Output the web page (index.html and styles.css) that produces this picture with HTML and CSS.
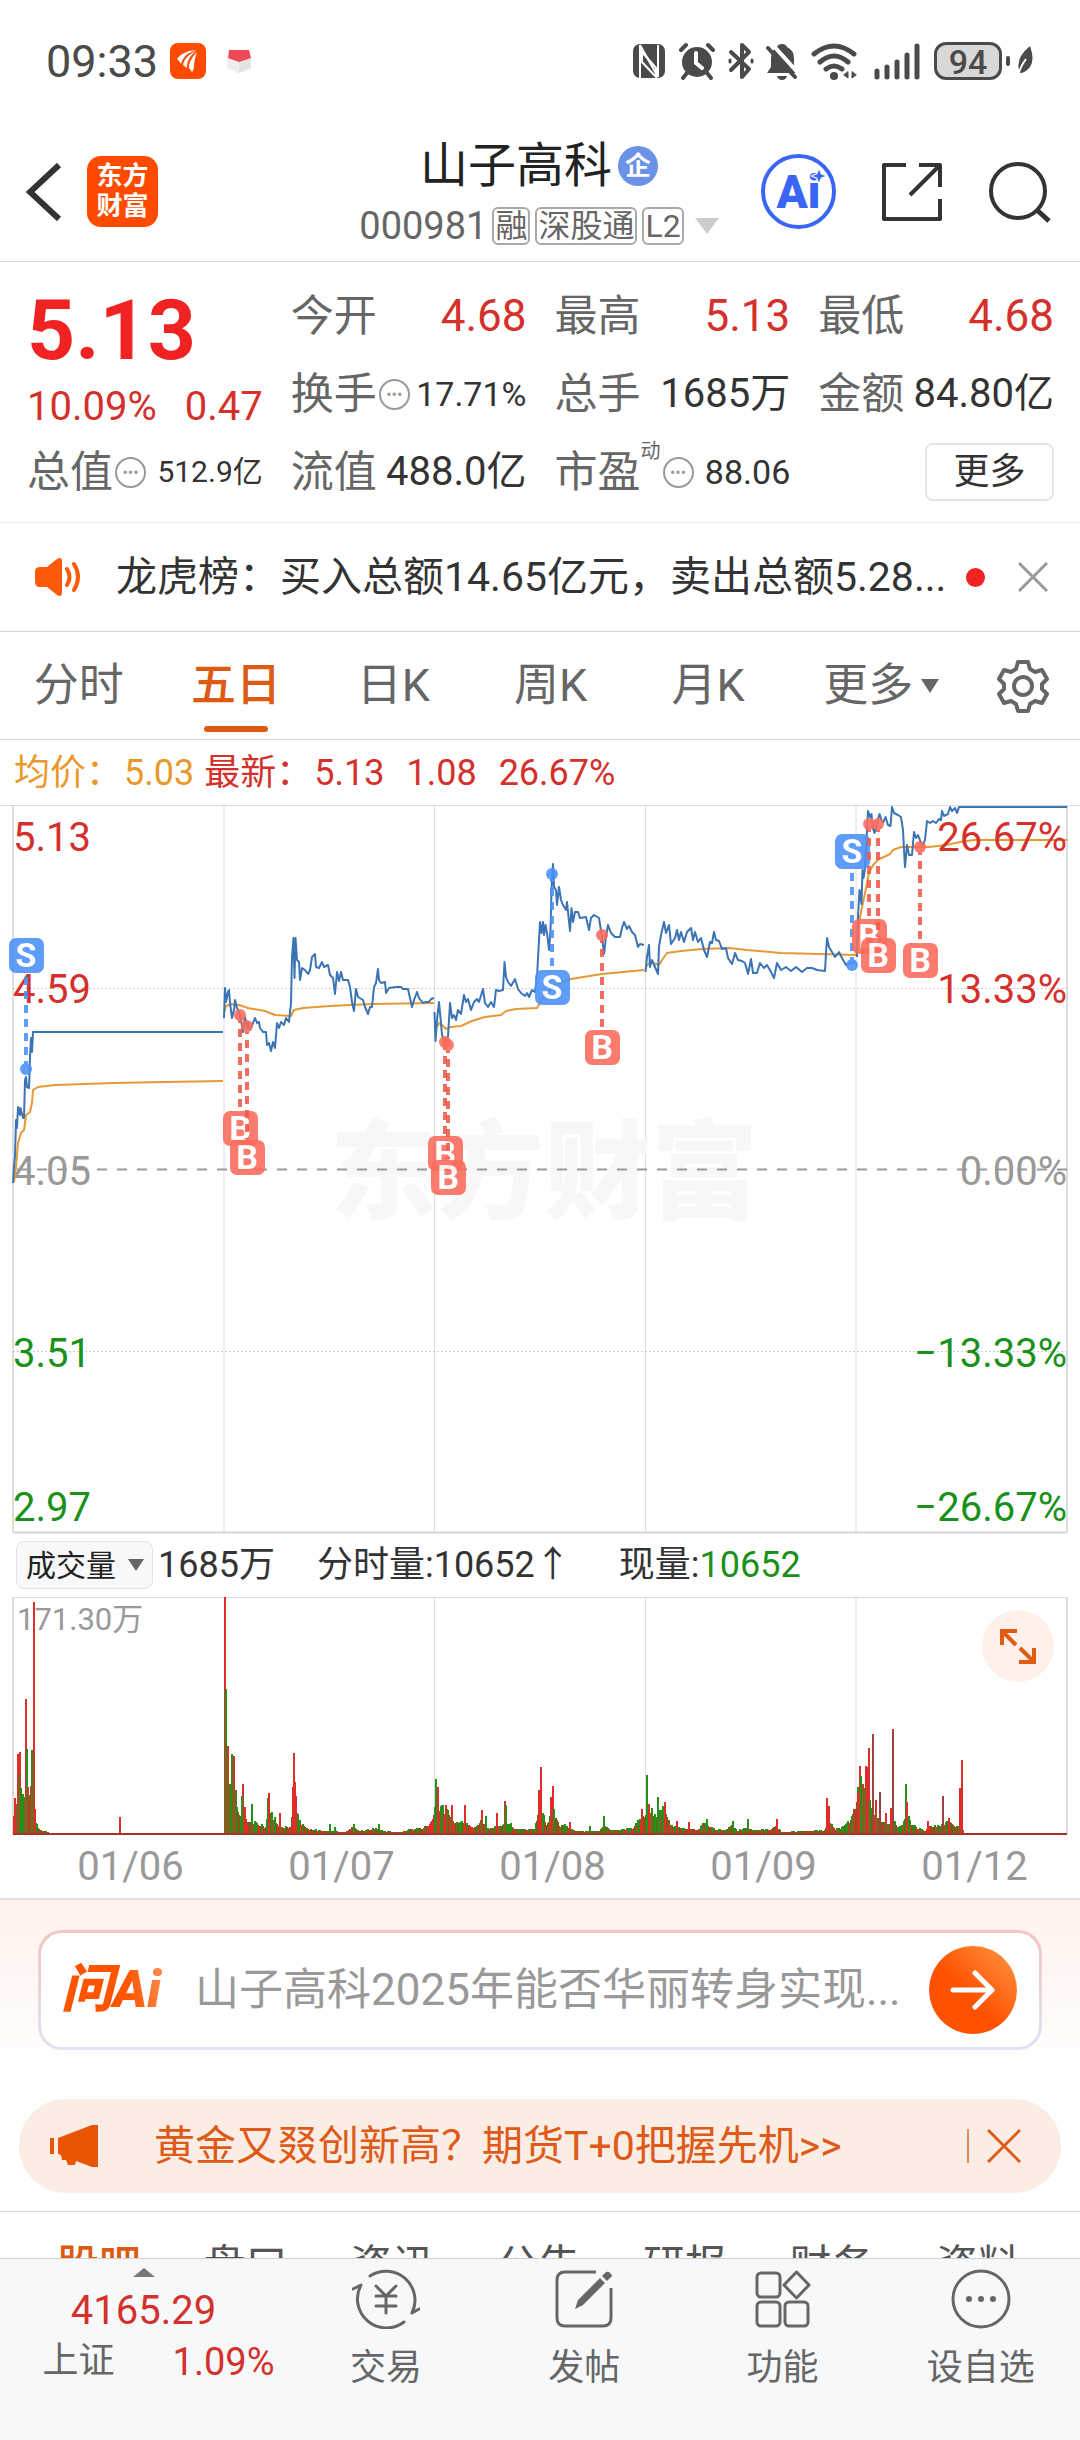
FILE: index.html
```html
<!DOCTYPE html>
<html lang="zh-CN">
<head>
  <meta charset="UTF-8">
  <meta name="viewport" content="width=device-width, initial-scale=1.0">
  <title>山子高科 000981</title>
  <link rel="stylesheet" href="styles.css">
</head>
<body>

  <!-- Status bar -->
  <div class="status-bar">
    <div class="status-left">
      <span class="clock">09:33</span>
      <svg width="36" height="36" viewBox="0 0 36 36">
        <rect width="36" height="36" rx="8" fill="#ff4a00"/>
        <path d="M7 16c3-5 11-9 20-9-8 2-14 6-16 14-1-2-2-3-4-5zM13 22c1-6 6-11 13-14-6 5-9 9-9 17zM19 25c0-6 3-11 8-16-2 6-3 10-3 14 0 3-1 5-2 6z" fill="#fff"/>
      </svg>
      <svg class="parcel" width="26" height="26" viewBox="0 0 26 26">
        <path d="M1 9h24v11l-12 5-12-5z" fill="#e6e2e2"/>
        <path d="M1 9h12v16L1 20z" fill="#f2eeee"/>
        <path d="M3 2h20l2 8-12 4L2 10z" fill="#ee4a56"/>
      </svg>
    </div>
    <div class="status-right">
      <svg width="34" height="36" viewBox="0 0 34 36">
        <rect x="1" y="1" width="32" height="34" rx="7" fill="#4a4a4a"/>
        <path d="M8 35V2M8 2l18 32M26 34V2" fill="none" stroke="#fff" stroke-width="2"/>
        <path d="M10 9v10l14 15V25z" fill="none" stroke="#fff" stroke-width="2"/>
      </svg>
      <svg width="38" height="38" viewBox="0 0 38 38" fill="none" stroke="#4a4a4a">
        <circle cx="19" cy="20" r="15" fill="#4a4a4a" stroke="none"/>
        <path d="M3 8l5-5M35 8l-5-5M9 31l-4 5M29 31l4 5" stroke-width="4" stroke-linecap="round"/>
        <path d="M18 11v10l6 5" stroke="#fff" stroke-width="4" stroke-linecap="round"/>
      </svg>
      <svg width="26" height="38" viewBox="0 0 26 38" fill="none" stroke="#4a4a4a" stroke-width="4" stroke-linejoin="round" stroke-linecap="round">
        <path d="M3 10l18 17-7 8V3l7 7L3 28"/>
        <path d="M2 18v2M24 18v2" stroke-width="3"/>
      </svg>
      <svg width="32" height="38" viewBox="0 0 32 38">
        <path d="M16 2q4 0 5 3 7 3 7 12v8l3 6H1l4-6v-8Q5 8 11 5q1-3 5-3zM11 34h10q-1 4-5 4t-5-4z" fill="#4a4a4a"/>
        <path d="M5 1l29 32" stroke="#fff" stroke-width="4"/>
        <path d="M2 6l27 29" stroke="#4a4a4a" stroke-width="4" stroke-linecap="round"/>
      </svg>
      <svg width="48" height="38" viewBox="0 0 48 38" fill="none" stroke="#4a4a4a" stroke-width="5" stroke-linecap="round">
        <path d="M4 12q20-16 40 0M10 20q14-12 28 0M16 27q8-6 16 0"/>
        <circle cx="24" cy="34" r="4" fill="#4a4a4a" stroke="none"/>
        <path d="M38 30v6l-4-3zM42 30v6l4-3z" stroke-width="1" fill="#4a4a4a"/>
      </svg>
      <svg class="signal" width="46" height="38" viewBox="0 0 46 38" stroke="#4a4a4a" stroke-width="5" stroke-linecap="round">
        <path d="M3 35v-6M13 35V25M23 35V20M33 35V13M43 35V4"/>
      </svg>
      <span class="battery">94</span>
      <svg width="28" height="38" viewBox="0 0 28 38">
        <rect x="0" y="14" width="4" height="10" rx="2" fill="#4a4a4a"/>
        <path d="M24 4q5 14 0 21-5 6-10 6Q8 17 24 4z" fill="#4a4a4a"/>
        <path d="M12 34q2-9 8-17" stroke="#fff" stroke-width="2" fill="none"/>
      </svg>
    </div>
  </div>

  <!-- Title bar -->
  <header class="header">
    <div class="header-left">
      <button class="icon-btn" aria-label="返回">
        <svg width="36" height="58" viewBox="0 0 36 58" fill="none" stroke="#333" stroke-width="6">
          <path d="M33 2L4 29l29 27"/>
        </svg>
      </button>
      <a class="brand" href="#">东方<br>财富</a>
    </div>
    <div class="stock">
      <h1 class="stock-name">山子高科<span class="badge">企</span></h1>
      <div class="stock-code">
        <span>000981</span>
        <span class="tag">融</span>
        <span class="tag">深股通</span>
        <span class="tag">L2</span>
        <svg class="code-arrow" width="24" height="16" viewBox="0 0 24 16"><path d="M0 0h24L12 16z" fill="#ccc"/></svg>
      </div>
    </div>
    <div class="header-right">
      <button class="ai-btn">Ai
        <svg width="16" height="16" viewBox="0 0 14 14"><path d="M7 0l2 5 5 2-5 2-2 5-2-5-5-2 5-2z" fill="#3b66f5" stroke="#fff"/></svg>
      </button>
      <button class="icon-btn" aria-label="分享">
        <svg width="62" height="62" viewBox="0 0 62 62" fill="none" stroke="#333" stroke-width="4" stroke-linejoin="round">
          <path d="M25 4H3v54h56V38M38 4h21v22M58 5L29 34"/>
        </svg>
      </button>
      <button class="icon-btn" aria-label="搜索">
        <svg width="64" height="64" viewBox="0 0 64 64" fill="none" stroke="#333" stroke-width="4">
          <circle cx="30" cy="31" r="27"/>
          <path d="M49 50l12 11" stroke-width="5"/>
        </svg>
      </button>
    </div>
  </header>

  <!-- Quote summary -->
  <section class="quote">
    <div class="price">
      <div class="price-now">5.13</div>
      <div class="price-change"><span>10.09%</span><span>0.47</span></div>
    </div>
    <div class="cell"><span class="label">今开</span><span class="value up">4.68</span></div>
    <div class="cell"><span class="label">最高</span><span class="value up">5.13</span></div>
    <div class="cell"><span class="label">最低</span><span class="value up">4.68</span></div>
    <div class="cell"><span class="label">换手<i class="dots">•••</i></span><span class="value small">17.71%</span></div>
    <div class="cell"><span class="label">总手</span><span class="value">1685万</span></div>
    <div class="cell"><span class="label">金额</span><span class="value">84.80亿</span></div>
    <div class="cell"><span class="label">总值<i class="dots">•••</i></span><span class="value tiny">512.9亿</span></div>
    <div class="cell"><span class="label">流值</span><span class="value">488.0亿</span></div>
    <div class="cell"><span class="label">市盈<sup>动</sup><i class="dots">•••</i></span><span class="value small">88.06</span></div>
    <div class="cell cell-more"><button class="more-btn">更多</button></div>
  </section>

  <!-- Notice -->
  <div class="notice">
    <svg width="48" height="40" viewBox="0 0 48 40">
      <path d="M6 10h7L23 2q5-3 5 3v30q0 6-5 3l-10-8H6q-5 0-5-5V15q0-5 5-5z" fill="#ff5a0a"/>
      <path d="M33 12q5 8 0 16M40 7q8 13 0 26" fill="none" stroke="#ff5a0a" stroke-width="4" stroke-linecap="round"/>
    </svg>
    <a class="notice-text" href="#">龙虎榜：买入总额14.65亿元，卖出总额5.28...</a>
    <span class="notice-dot"></span>
    <button class="icon-btn" aria-label="关闭">
      <svg width="30" height="30" viewBox="0 0 30 30" stroke="#999" stroke-width="3"><path d="M1 1l28 28M29 1L1 29"/></svg>
    </button>
  </div>

  <!-- Period tabs -->
  <nav class="tabs">
    <a href="#">分时</a>
    <a href="#" class="active">五日</a>
    <a href="#">日K</a>
    <a href="#">周K</a>
    <a href="#">月K</a>
    <button class="tabs-more">更多<svg width="18" height="14" viewBox="0 0 18 14"><path d="M0 0h18L9 14z" fill="#666"/></svg></button>
    <button class="icon-btn" aria-label="设置">
      <svg width="54" height="54" viewBox="0 0 54 54" fill="none" stroke="#666" stroke-width="4" stroke-linejoin="round">
        <path d="M22 3h10l2 7 5 3 7-2 5 9-5 5v5l5 5-5 9-7-2-5 3-2 7H22l-2-7-5-3-7 2-5-9 5-5v-5l-5-5 5-9 7 2 5-3z"/>
        <circle cx="27" cy="27" r="9"/>
      </svg>
    </button>
  </nav>

  <div class="averages">
    <span class="avg">均价：<b>5.03</b></span>
    <span class="last">最新：<b>5.13</b><b>1.08</b><b>26.67%</b></span>
  </div>

  <!-- Five day price chart -->
  <svg class="chart" viewBox="0 0 1080 730">
    <g fill="none" stroke="#dcdcdc" stroke-width="1">
      <path d="M0 1.5h1080M224 2v726M434.500 2v726M645.500 2v726M856 2v726"/>
      <path d="M13 2v726M1067 2v726" stroke-width="2"/>
      <path d="M13 728.500h1054" stroke="#d6d6d6" stroke-width="2"/>
      <path d="M13 184.500h1054M13 547.500h1054" stroke="#ccc" stroke-dasharray="2 2"/>
    </g>
    <text class="watermark" x="544" y="406">东方财富</text>
    <path d="M13 365.500h1054" stroke="#999" stroke-width="2" stroke-dasharray="10 10" stroke-dashoffset="-4"/>

    <g class="axis">
      <text class="rise" x="13" y="47">5.13</text>
      <text class="rise" x="13" y="199">4.59</text>
      <text class="flat" x="13" y="381">4.05</text>
      <text class="fall" x="13" y="563">3.51</text>
      <text class="fall" x="13" y="717">2.97</text>
    </g>

    <g class="line-avg">
      <polyline points="14,378 16,363 18,339 21,329 24,326 26,311 30,308 32,299 33,286 38,283 55,281 114,279 165,278 223,277"/>
      <polyline points="224,209 226,202 231,200 239,201 248,204 265,207 275,211 291,212 294,206 303,204 330,202 372,200 434,199"/>
      <polyline points="435,226 439,219 442,221 446,225 451,223 461,222 472,217 485,213 501,211 506,207 516,205 537,204 543,194 550,186 555,181 571,175 602,170 644,166"/>
      <polyline points="646,163 650,158 659,161 662,156 667,149 681,147 702,145 729,144 747,146 781,149 856,151"/>
      <polyline points="856,151 860,113 865,89 869,69 873,61 879,55 884,53 890,50 893,46 901,43 929,43 946,41 960,38 974,36 1067,36"/>
    </g>
    <g class="line-price">
      <polyline points="13,379 14,363 15,352 16,316 17,324 18,303 20,311 20.5,304 23,314 24,314 25,276 26,273 27,283 29,284 30,253 31,234 32,248 33,228 223,228"/>
      <polyline points="224,214 225,184 226,198 228,188 229,186 230,199 232,214 234,206 235,196 237,204 239,208 241,216 243,228 245,213 247,224 248,219 250,226 253,219 255,214 257,219 259,218 260,224 263,228 266,228 267,241 269,239 271,247 273,238 275,244 277,219 279,224 281,218 284,221 286,214 289,218 291,199 292,153 293.5,134 294.5,174 295.5,134 297,156 299,158 300,176 302,164 305,166 308,170 310,166 312,153 315,150 316,163 319,164 322,158 324,163 328,161 330,171 333,174 335,190 337,168 339,177 341,168 343,176 348,176 350,183 352,198 354,207 356,185 358,193 363,196 365,203 368,210 370,203 372,203 374,183 376,179 378,165 379,176 381,179 385,178 386,189 389,184 396,183 401,183 403,185 408,185 410,194 412,203 414,196 417,188 419,194 423,199 426,198 429,198 431,195 434,194"/>
      <polyline points="434.5,208 435.5,237 437,216 439,198 441,219 442,231 445,238 447,234 448,233 450,199 452,214 454,211 456,216 458,206 461,210 464,191 466,198 468,195 471,206 474,198 477,195 479,198 483,185 485,199 488,203 491,198 494,203 496,186 499,187 503,186 504.5,158 506,173 508,178 511,182 515,175 518,185 521,189 525,192 527,189 529,193 532,186 535,188 537,173 539,136 540,118 541.5,129 543,118 544,131 545.5,121 547,129 549,146 550.5,126 551.5,86 553,60 554,83 556,86 557,101 559,83 561,96 563,101 566,106 567,98 570,127 571.5,104 573,118 575,108 578,108 580,114 586,113 589,126 591,114 594,111 599,114 602,133 604,150 606,133 608,121 611,129 615,133 620,133 622,124 624,118 627,125 629,122 632,128 635,131 638,143 640,140 644,141"/>
      <polyline points="645.5,168 647,153 649,141 650,163 652,156 655,163 658,170 659,143 661,131 664,118 666,129 669,121 671,140 675,134 677,126 679,136 681,128 684,138 687,128 691,124 693,136 695,128 698,138 701,134 704,146 707,153 710,138 712,139 714,128 716,136 719,137 722,145 726,144 728,154 732,160 735,149 738,156 742,157 745,159 748,170 751,155 753,169 757,169 760,159 764,164 767,161 771,168 774,174 777,159 781,166 786,163 791,167 796,163 802,168 807,164 812,164 817,166 825,167 826,149 827,134 829,143 832,148 835,153 839,148 842,154 846,161 851,159 855,158"/>
      <polyline points="857,153 858,113 859.5,86 861.5,100 862.5,66 863.5,74 865,64 866.5,36 868,7 870,13 871.5,10 872.5,23 874.5,29 877,19 879.5,10 881.5,16 883.5,18 885.5,13 888,21 890.5,22 892,3 894,9 898,11 901,13 903,26 904,46 905,63 907,41 909,51 912,51 914,28 916,34 918,31 921,39 923,41 925,36 927,17 930,19 933,17 936,19 939,15 941,16 942,7 944,12 948,10 950,3 952,7 955,4 957,9 959,3 1067,3"/>
    </g>

    <g class="axis axis-right">
      <text class="rise" x="1067" y="47">26.67%</text>
      <text class="rise" x="1067" y="199">13.33%</text>
      <text class="flat" x="1067" y="381">0.00%</text>
      <text class="fall" x="1067" y="563">−13.33%</text>
      <text class="fall" x="1067" y="717">−26.67%</text>
    </g>

    <g id="trades"></g>
  </svg>

  <div class="volume-info">
    <select class="volume-select" aria-label="指标">
      <option>成交量</option>
    </select>
    <span class="volume-total">1685万</span>
    <span class="volume-minute">分时量:10652↑</span>
    <span>现量:<b>10652</b></span>
  </div>

  <!-- Volume chart -->
  <div class="volume">
    <svg class="chart" viewBox="0 0 1080 240">
      <path d="M13 1.500h1054M434.500 1v238M645.500 1v238M856 1v238" stroke="#dcdcdc"/>
      <path d="M13 1v238M1067 1v238" stroke="#dcdcdc" stroke-width="2"/>
      <text class="volume-max" x="17" y="34">171.30万</text>
      <g id="bars"></g>
      <path d="M13 238h1054" stroke="#a8322c" stroke-width="2"/>
    </svg>
    <button class="expand-btn" aria-label="全屏">
      <svg width="36" height="36" viewBox="0 0 36 36" fill="none" stroke="#e25b12" stroke-width="4">
        <path d="M2 17V3h15M3 4l13 13M34 20v14H19M33 33L20 20"/>
      </svg>
    </button>
  </div>
  <div class="dates">
    <span>01/06</span><span>01/07</span><span>01/08</span><span>01/09</span><span>01/12</span>
  </div>

  <!-- Ask AI -->
  <section class="ask">
    <form class="ask-box">
      <label class="ask-logo" for="question">问Ai</label>
      <input id="question" type="text" placeholder="山子高科2025年能否华丽转身实现...">
      <button class="ask-go" type="button" aria-label="提问">
        <svg width="46" height="40" viewBox="0 0 46 40" fill="none" stroke="#fff" stroke-width="5" stroke-linecap="round" stroke-linejoin="round">
          <path d="M3 20h39M25 3l17 17-17 17"/>
        </svg>
      </button>
    </form>
  </section>

  <div class="banner">
    <svg width="48" height="42" viewBox="0 0 48 42" fill="#ea5504">
      <path d="M0 13h4v16H0zM8 13L42 0h6v42h-6l-16-6-1 4h-7l-2-5h-4l-1-5-3-1z"/>
    </svg>
    <a class="banner-text" href="#">黄金又叕创新高？期货T+0把握先机&gt;&gt;</a>
    <button class="banner-close" aria-label="关闭">
      <svg width="34" height="34" viewBox="0 0 34 34" stroke="#dd5a18" stroke-width="3"><path d="M1 1l32 32M33 1L1 33"/></svg>
    </button>
  </div>

  <nav class="detail-tabs">
    <a href="#" class="active">股吧</a>
    <a href="#">盘口</a>
    <a href="#">资讯</a>
    <a href="#">公告</a>
    <a href="#">研报</a>
    <a href="#">财务</a>
    <a href="#">资料</a>
  </nav>

  <!-- Bottom bar -->
  <footer class="bottom-bar">
    <a class="index" href="#">
      <svg width="22" height="9" viewBox="0 0 22 9"><path d="M0 9h22L11 0z" fill="#777"/></svg>
      <span class="index-value">4165.29</span>
      <span class="index-row"><span>上证</span><b>1.09%</b></span>
    </a>
    <a class="action" href="#">
      <svg width="68" height="60" viewBox="0 0 68 60" fill="none" stroke="#666" stroke-width="3" stroke-linecap="round" stroke-linejoin="round">
        <path d="M18 7a29 29 0 0 1 42 37l7-4M1 20l8-4a29 29 0 0 0 43 37"/>
        <path d="M24 17l10 10 10-10M24 27h20M24 37h20M34 27v17"/>
      </svg>
      交易
    </a>
    <a class="action" href="#">
      <svg width="60" height="60" viewBox="0 0 60 60" fill="none" stroke="#666" stroke-width="3">
        <path d="M42 3H11q-8 0-8 8v38q0 8 8 8h38q8 0 8-8V19"/>
        <path d="M21 40l3-9L46 9l5 5-22 22zM48 7l4-4q3-1 5 2t0 3l-4 4z" fill="#666" stroke="none"/>
      </svg>
      发帖
    </a>
    <a class="action" href="#">
      <svg width="56" height="60" viewBox="0 0 56 60" fill="none" stroke="#666" stroke-width="3" stroke-linejoin="round">
        <rect x="2" y="4" width="23" height="24" rx="4"/>
        <rect x="2" y="33" width="23" height="24" rx="4"/>
        <rect x="30" y="33" width="23" height="24" rx="4"/>
        <path d="M41.500 3L54 16 41.500 29 29 16z"/>
      </svg>
      功能
    </a>
    <a class="action" href="#">
      <svg width="60" height="60" viewBox="0 0 60 60" fill="#666">
        <circle cx="30" cy="30" r="28" fill="none" stroke="#666" stroke-width="3"/>
        <circle cx="18" cy="30" r="3"/><circle cx="30" cy="30" r="3"/><circle cx="42" cy="30" r="3"/>
      </svg>
      设自选
    </a>
  </footer>

  <script src="chart.js"></script>
</body>
</html>
```
FILE: styles.css
```css
* {
  box-sizing: border-box;
}

body {
  margin: 0;
  background: #fff;
  color: #333;
  font-family: Roboto, "Noto Sans CJK SC", sans-serif;
  font-size: 36px;
  line-height: 1;
}

a {
  color: inherit;
  text-decoration: none;
}

button {
  border: none;
  background: none;
  padding: 0;
  color: inherit;
  font: inherit;
}

svg {
  display: block;
  flex: none;
}

b, i {
  font-weight: normal;
  font-style: normal;
}

.icon-btn {
  flex: none;
}

/* status bar */
.status-bar {
  display: flex;
  justify-content: space-between;
  align-items: center;
  height: 122px;
  padding: 0 46px;
  color: #4a4a4a;
}

.status-left, .status-right {
  display: flex;
  align-items: center;
  gap: 12px;
}

.clock {
  font-size: 45px;
}

.parcel {
  margin-left: 8px;
}

.signal {
  margin: 0 2px 0 4px;
}

.battery {
  width: 68px;
  height: 38px;
  border: 3px solid #4a4a4a;
  border-radius: 12px;
  background: #d8d8d8;
  font-size: 34px;
  font-weight: 500;
  line-height: 34px;
  text-align: center;
  margin-right: -8px;
}

/* title bar */
.header {
  display: grid;
  grid-template-columns: 1fr auto 1fr;
  align-items: center;
  height: 140px;
  padding: 0 28px 0 26px;
  border-bottom: 1px solid #d8d8d8;
}

.header-left {
  display: flex;
  align-items: center;
  gap: 25px;
}

.brand {
  width: 71px;
  height: 71px;
  padding-top: 5px;
  border-radius: 14px;
  background: #ff4a00;
  color: #fff;
  font-size: 26px;
  font-weight: bold;
  line-height: 30px;
  text-align: center;
}

.stock {
  text-align: center;
}

.stock-name {
  display: flex;
  justify-content: center;
  align-items: center;
  gap: 6px;
  margin: 0 0 4px;
  color: #222;
  font-size: 48px;
  font-weight: normal;
  line-height: 64px;
}

.badge {
  width: 40px;
  height: 40px;
  border-radius: 50%;
  background: #6a92e6;
  color: #fff;
  font-size: 26px;
  font-weight: bold;
  line-height: 40px;
}

.stock-code {
  display: flex;
  justify-content: center;
  align-items: center;
  gap: 5px;
  height: 48px;
  color: #666;
  font-size: 38px;
}

.tag {
  height: 38px;
  padding: 0 1px;
  border: 2px solid #aaa;
  border-radius: 6px;
  font-size: 32px;
  line-height: 34px;
}

.code-arrow {
  margin-left: 6px;
}

.header-right {
  display: flex;
  justify-content: flex-end;
  align-items: center;
  gap: 45px;
}

.ai-btn {
  position: relative;
  width: 75px;
  height: 75px;
  border: 4px solid #3b66f5;
  border-radius: 50%;
  color: #3b66f5;
  font-size: 46px;
  font-weight: 900;
}

.ai-btn svg {
  position: absolute;
  top: 10px;
  right: 5px;
}

/* quote summary */
.quote {
  display: grid;
  grid-template-columns: repeat(4, 1fr);
  grid-auto-rows: 78px;
  column-gap: 28px;
  padding: 15px 26px 11px 27px;
  border-bottom: 1px solid #eee;
}

.price {
  grid-row: span 2;
  color: #f02222;
}

.price-now {
  padding-top: 14px;
  font-size: 84px;
  font-weight: 700;
  line-height: 80px;
}

.price-change {
  display: flex;
  justify-content: space-between;
  padding-top: 14px;
  color: #d4302c;
  font-size: 40px;
  line-height: 44px;
}

.cell {
  display: flex;
  justify-content: space-between;
  align-items: center;
  white-space: nowrap;
}

.label {
  display: flex;
  align-items: center;
  color: #666;
  font-size: 43px;
}

.label sup {
  align-self: flex-start;
  margin: -10px -18px 0 0;
  font-size: 20px;
  line-height: 20px;
}

.label sup + .dots {
  margin-left: 20px;
}

.dots {
  width: 31px;
  height: 31px;
  margin-left: 2px;
  border: 2px solid #999;
  border-radius: 50%;
  color: #999;
  font-size: 16px;
  line-height: 27px;
  text-align: center;
}

.value {
  font-size: 40px;
}

.value.up {
  color: #d4302c;
  font-size: 44px;
}

.value.small {
  font-size: 34px;
}

.value.tiny {
  font-size: 30px;
}

.cell-more {
  justify-content: flex-end;
}

.more-btn {
  width: 129px;
  height: 58px;
  border: 2px solid #e6e6e6;
  border-radius: 8px;
  font-size: 36px;
}

/* notice */
.notice {
  display: flex;
  align-items: center;
  height: 109px;
  padding: 0 32px 0 34px;
  border-bottom: 1px solid #d8d8d8;
}

.notice-text {
  flex: 1;
  margin-left: 34px;
  font-size: 41px;
  white-space: nowrap;
}

.notice-dot {
  width: 19px;
  height: 19px;
  margin-right: 33px;
  border-radius: 50%;
  background: #f02222;
}

/* period tabs */
.tabs {
  display: grid;
  grid-template-columns: repeat(5, 5fr) 6fr 3fr;
  align-items: center;
  justify-items: center;
  height: 108px;
  padding-right: 10px;
  border-bottom: 1px solid #d8d8d8;
  color: #666;
  font-size: 45px;
}

.tabs a {
  position: relative;
  line-height: 92px;
}

.tabs .active {
  color: #dd5a12;
  font-weight: 500;
}

.tabs .active::after {
  content: "";
  position: absolute;
  bottom: 0;
  left: 50%;
  width: 64px;
  height: 6px;
  margin-left: -32px;
  border-radius: 3px;
  background: #dd5a12;
}

.tabs-more {
  display: flex;
  align-items: center;
  gap: 8px;
}

.averages {
  display: flex;
  align-items: center;
  gap: 10px;
  height: 66px;
  margin-bottom: -2px;
  padding-left: 14px;
}

.avg {
  color: #e8992a;
}

.avg b {
  margin-left: 2px;
}

.last {
  color: #d4302c;
}

.last b {
  margin-left: 2px;
  margin-right: 20px;
}

/* charts */
.chart {
  width: 100%;
  height: auto;
}

.watermark {
  fill: #f7f7f7;
  font-size: 107px;
  font-weight: 900;
  text-anchor: middle;
}

.axis {
  font-size: 40px;
}

.axis-right {
  text-anchor: end;
}

.rise {
  fill: #d4302c;
}

.flat {
  fill: #999;
}

.fall {
  fill: #1b901b;
}

.line-avg, .line-price {
  fill: none;
  stroke-width: 2;
  stroke-linejoin: round;
}

.line-avg {
  stroke: #e59a35;
}

.line-price {
  stroke: #3a74b4;
}

.trade {
  opacity: 0.88;
}

.trade line {
  stroke-width: 4;
  stroke-dasharray: 8 6;
}

.trade text {
  fill: #fff;
  stroke: none;
  font-size: 34px;
  font-weight: bold;
  text-anchor: middle;
}

.trade.buy {
  fill: #fb6b5b;
  stroke: #f05a4a;
}

.trade.sell {
  fill: #4a90fa;
  stroke: #4a90fa;
}

.trade rect, .trade circle {
  stroke: none;
}

.volume-info {
  display: flex;
  align-items: center;
  height: 62px;
  padding-left: 16px;
}

.volume-select {
  width: 137px;
  height: 48px;
  padding: 0 9px;
  border: 1px solid #e0e2e6;
  border-radius: 8px;
  appearance: none;
  background: #f7f8fa;
  color: #222;
  font: 30px Roboto, "Noto Sans CJK SC", sans-serif;
}

.volume-info::before {
  content: "";
  order: 1;
  width: 16px;
  height: 12px;
  margin-left: -25px;
  margin-right: 14px;
  background: #666;
  clip-path: polygon(0 0, 100% 0, 50% 100%);
  z-index: 1;
}

.volume-info span {
  order: 2;
}

.volume-minute {
  margin: 0 48px 0 42px;
}

.volume-info b {
  color: #1b901b;
}

.volume {
  position: relative;
}

.volume-max {
  fill: #999;
  font-size: 31px;
}

.expand-btn {
  position: absolute;
  top: 14px;
  right: 26px;
  display: grid;
  place-items: center;
  width: 72px;
  height: 72px;
  border-radius: 50%;
  background: #fff1ea;
}

.dates {
  display: grid;
  grid-template-columns: repeat(5, 1fr);
  padding-left: 25px;
  color: #999;
  font-size: 40px;
  line-height: 62px;
  text-align: center;
}

/* ask AI */
.ask {
  padding: 30px 38px;
  border-top: 2px solid #e4e0e0;
  background: linear-gradient(#fff1ec, #fff);
}

.ask-box {
  display: flex;
  align-items: center;
  height: 120px;
  padding: 0 22px 0 20px;
  border: 3px solid transparent;
  border-radius: 24px;
  background: linear-gradient(#fff, #fff) padding-box, linear-gradient(#f2c6c0, #dfe5f2) border-box;
}

.ask-logo {
  width: 110px;
  margin-right: 24px;
  background: linear-gradient(80deg, #ff5500 60%, #ff9a66);
  background-clip: text;
  color: transparent;
  font-size: 52px;
  font-style: italic;
  font-weight: 900;
  line-height: 60px;
  white-space: nowrap;
}

.ask-box input {
  flex: 1;
  min-width: 0;
  padding: 0;
  border: none;
  background: none;
  font: 44px Roboto, "Noto Sans CJK SC", sans-serif;
}

.ask-box input::placeholder {
  color: #999;
}

.ask-go {
  display: grid;
  place-items: center;
  width: 88px;
  height: 88px;
  border-radius: 50%;
  background: linear-gradient(45deg, #ff5200 45%, #ff9a4a);
}

/* banner */
.banner {
  display: flex;
  align-items: center;
  height: 94px;
  margin: 19px 19px 18px;
  padding: 0 40px 0 31px;
  border-radius: 47px;
  background: #fcede4;
  color: #dd5a18;
}

.banner-text {
  flex: 1;
  margin-left: 56px;
  font-size: 41px;
}

.banner-close {
  padding-left: 18px;
  border-left: 2px solid #dd8a60;
}

.detail-tabs {
  display: flex;
  justify-content: space-between;
  height: 47px;
  padding: 33px 60px 0 57px;
  border-top: 1px solid #d8d8d8;
  overflow: hidden;
  color: #555;
  font-size: 42px;
}

.detail-tabs .active {
  color: #dd5a12;
  font-weight: 500;
}

/* bottom bar */
.bottom-bar {
  display: grid;
  grid-template-columns: 287px repeat(4, 1fr);
  height: 182px;
  border-top: 1px solid #d0d0d0;
  background: #f7f8fa;
  color: #666;
}

.index {
  display: flex;
  flex-direction: column;
  align-items: center;
  padding-top: 9px;
}

.index-value {
  margin-top: 14px;
  color: #d4302c;
  font-size: 40px;
}

.index-row {
  display: flex;
  justify-content: space-between;
  width: 232px;
  margin: 12px 0 0 30px;
}

.index-row b {
  color: #d4302c;
  font-size: 38px;
}

.action {
  display: flex;
  flex-direction: column;
  align-items: center;
  gap: 21px;
  padding-top: 10px;
}
```
FILE: chart.js
```js
const SVG_NS = 'http://www.w3.org/2000/svg';

function add(parent, name, attrs, text) {
  const el = document.createElementNS(SVG_NS, name);
  for (const key in attrs) {
    el.setAttribute(key, attrs[key]);
  }
  if (text) el.textContent = text;
  parent.appendChild(el);
  return el;
}

// trade markers: type, x, y of the deal, y of the label
const trades = [
  ['S', 26, 265, 151],
  ['B', 240, 211, 324],
  ['B', 247, 222, 353],
  ['B', 445, 238, 349],
  ['B', 448, 241, 373],
  ['S', 552, 70, 183],
  ['B', 602, 131, 243],
  ['S', 852, 161, 47],
  ['B', 869, 20, 132],
  ['B', 878, 20, 151],
  ['B', 920, 43, 156]
];

trades.forEach(([type, x, dealY, labelY]) => {
  const g = add(document.getElementById('trades'), 'g', { class: type === 'B' ? 'trade buy' : 'trade sell' });
  const edge = labelY > dealY ? labelY - 18 : labelY + 18;
  add(g, 'line', { x1: x, y1: dealY, x2: x, y2: edge });
  add(g, 'circle', { cx: x, cy: dealY, r: 6 });
  add(g, 'rect', { x: x - 17, y: labelY - 17, width: 35, height: 35, rx: 7 });
  add(g, 'text', { x: x, y: labelY + 12 }, type);
});

// volume: general level per x, then the single peaks
const levels = [
  [13, 25], [24, 35], [32, 40], [34, 15], [37, 6], [41, 4], [47, 2], [50, 1], [223, 1],
  [224, 50], [230, 42], [235, 30], [238, 20], [248, 14], [255, 11], [265, 8], [268, 25], [272, 15],
  [280, 7], [290, 8], [292, 30], [296, 30], [298, 15], [305, 6], [318, 4], [345, 2], [352, 8],
  [358, 3], [376, 6], [382, 3], [400, 2], [410, 5], [422, 6], [428, 11], [432, 20],
  [435, 30], [447, 24], [452, 13], [465, 11], [475, 7], [480, 14], [488, 5], [503, 10], [507, 10],
  [515, 5], [534, 5], [538, 25], [542, 20], [546, 9], [549, 18], [554, 20], [558, 10], [566, 7],
  [575, 3], [598, 3], [603, 9], [610, 4], [620, 4], [632, 7], [638, 14],
  [645, 20], [650, 26], [655, 17], [660, 24], [666, 20], [670, 9], [680, 6], [698, 5], [703, 12],
  [709, 8], [714, 5], [725, 4], [731, 10], [736, 3], [746, 7], [752, 4], [770, 5], [776, 9],
  [780, 2], [824, 4], [829, 14], [834, 5], [840, 6], [848, 13], [855, 25],
  [857, 45], [867, 32], [872, 20], [882, 13], [888, 9], [892, 15], [898, 6], [902, 10], [906, 22],
  [910, 10], [918, 6], [924, 3], [928, 9], [940, 8], [948, 14], [954, 7], [961, 8], [963, 1], [1066, 1]
];

const peaks = [
  [14, 36, 'r'], [17, 80, 'r'], [18, 60, 'g'], [19, 82, 'r'], [20, 46, 'g'], [22, 40, 'g'],
  [25, 135, 'r'], [26, 85, 'g'], [27, 47, 'r'], [30, 48, 'r'], [31, 84, 'g'], [33, 232, 'r'], [34, 25, 'r'],
  [119, 17, 'r'],
  [224, 237, 'r'], [225, 145, 'g'], [227, 88, 'r'], [229, 50, 'g'], [233, 78, 'r'], [231, 80, 'g'],
  [235, 44, 'g'], [242, 50, 'r'], [241, 38, 'g'], [244, 27, 'r'], [251, 30, 'g'], [267, 36, 'g'],
  [268, 41, 'r'], [271, 22, 'g'], [274, 17, 'g'], [279, 21, 'r'], [292, 47, 'r'], [293, 81, 'r'],
  [294, 52, 'r'], [295, 38, 'r'], [297, 20, 'g'], [329, 10, 'g'], [334, 7, 'g'], [353, 10, 'g'], [378, 10, 'g'],
  [435, 55, 'g'], [437, 47, 'r'], [441, 29, 'g'], [445, 29, 'r'], [451, 29, 'r'], [464, 29, 'r'],
  [481, 24, 'r'], [485, 18, 'g'], [496, 21, 'r'], [504, 33, 'r'], [505, 29, 'g'], [510, 11, 'g'],
  [538, 44, 'r'], [540, 67, 'r'], [550, 37, 'r'], [552, 48, 'r'], [553, 25, 'g'], [564, 10, 'g'],
  [569, 12, 'r'], [589, 8, 'g'], [603, 18, 'g'], [641, 25, 'r'],
  [646, 59, 'g'], [648, 30, 'r'], [651, 26, 'g'], [657, 37, 'g'], [662, 28, 'g'], [664, 32, 'r'],
  [676, 13, 'r'], [688, 12, 'r'], [706, 15, 'g'], [732, 13, 'g'], [747, 15, 'g'], [776, 15, 'r'],
  [826, 36, 'r'], [828, 28, 'r'], [853, 25, 'r'],
  [857, 41, 'r'], [859, 68, 'r'], [860, 58, 'g'], [862, 50, 'r'], [863, 46, 'g'], [865, 68, 'r'],
  [866, 67, 'r'], [868, 86, 'r'], [869, 34, 'g'], [872, 100, 'd'], [875, 34, 'r'], [879, 42, 'd'],
  [885, 21, 'r'], [890, 26, 'r'], [892, 105, 'd'], [905, 50, 'g'], [906, 32, 'r'], [927, 13, 'r'],
  [942, 38, 'd'], [948, 16, 'r'], [959, 46, 'r'], [961, 74, 'r']
];

const colors = { r: '#df2e2a', g: '#26901a', d: '#9c4040', m: '#7d5a14' };
const bars = document.getElementById('bars');
const floor = 238;

function bar(x, h, color) {
  add(bars, 'rect', { x: x, y: floor - h, width: 2, height: h, fill: colors[color] });
}

for (let i = 0; i < levels.length - 1; i++) {
  const [x0, h0] = levels[i];
  const [x1, h1] = levels[i + 1];
  for (let x = x0; x < x1; x++) {
    const level = h0 + (h1 - h0) * (x - x0) / (x1 - x0);
    const noise = Math.abs(Math.sin(x * 12.9898) * 43758.5453) % 1;
    const color = level <= 1 ? 'r' : 'rmg'[Math.floor(noise * 3)];
    bar(x, Math.max(1, Math.round(level * (0.7 + noise * 0.4))), color);
  }
}
peaks.forEach(([x, h, color]) => bar(x, h, color));
```
